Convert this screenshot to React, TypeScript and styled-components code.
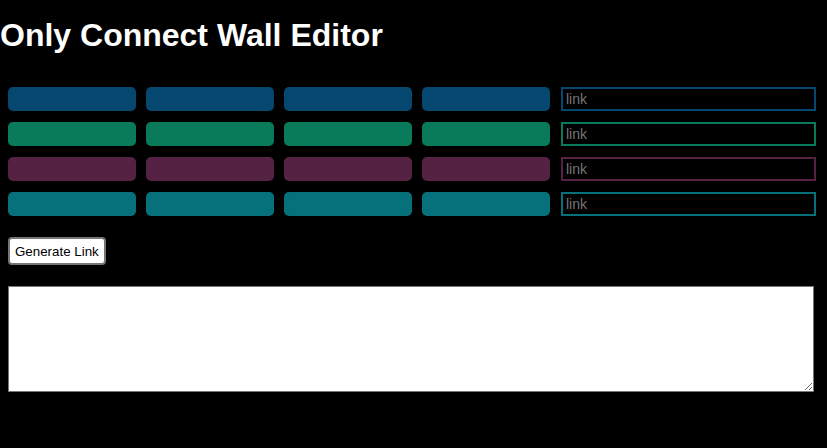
import React from 'react';
import styled, {createGlobalStyle} from "styled-components";

const GlobalStyle = createGlobalStyle`
  body {
    margin: 0;
    background-color: #000000;
    font-family: "Liberation Sans", Arial, sans-serif;
  }
`

type Group = {
    color: string
}

const groups: Group[] = [
    {color: "#05476f"},
    {color: "#0a7b5a"},
    {color: "#552243"},
    {color: "#06707b"},
]

export default function App() {
    return (
        <>
            <GlobalStyle/>
            <Page>
                <Title>Only Connect Wall Editor</Title>
                <Wall>
                    {groups.map((group, row) => (
                        <React.Fragment key={row}>
                            {[0, 1, 2, 3].map(col => (
                                <Tile key={col} color={group.color}/>
                            ))}
                            <LinkInput placeholder={"link"} color={group.color}/>
                        </React.Fragment>
                    ))}
                </Wall>
                <Controls>
                    <GenerateButton>Generate Link</GenerateButton>
                    <Output/>
                </Controls>
            </Page>
        </>
    );
}

const Page = styled.div`
  display: flex;
  flex-direction: column;
  padding-top: 17px;
`
const Title = styled.h1`
  margin: 0;
  font-size: 32px;
  line-height: 37px;
  font-weight: bold;
  color: #ffffff;
`
const Wall = styled.div`
  display: grid;
  grid-template-columns: repeat(4, 128px) 256px;
  grid-auto-rows: 24px;
  column-gap: 10px;
  row-gap: 11px;
  margin: 33px 0 0 8px;
`
const Tile = styled.div<{ color: string }>`
  background-color: ${props => props.color};
  border-radius: 5px;
`
const LinkInput = styled.input<{ color: string }>`
  box-sizing: border-box;
  height: 24px;
  margin-left: 1px;
  padding: 0 3px;
  background-color: #000000;
  border: 2px solid ${props => props.color};
  color: #ffffff;
  font-family: "Liberation Sans", Arial, sans-serif;
  font-size: 14px;
  outline: none;

  &::placeholder {
    color: #757575;
  }
`
const Controls = styled.div`
  display: flex;
  flex-direction: column;
  align-items: flex-start;
  gap: 21px;
  margin: 21px 0 0 8px;
`
const GenerateButton = styled.button`
  box-sizing: border-box;
  height: 28px;
  padding: 0 5px;
  background-color: #ffffff;
  border: 2px solid #767676;
  border-radius: 4px;
  color: #000000;
  font-family: "Liberation Sans", Arial, sans-serif;
  font-size: 13.33px;
`
const Output = styled.textarea`
  box-sizing: border-box;
  width: 806px;
  height: 106px;
  margin: 0;
  border: 1px solid #767676;
  background-color: #ffffff;
`
